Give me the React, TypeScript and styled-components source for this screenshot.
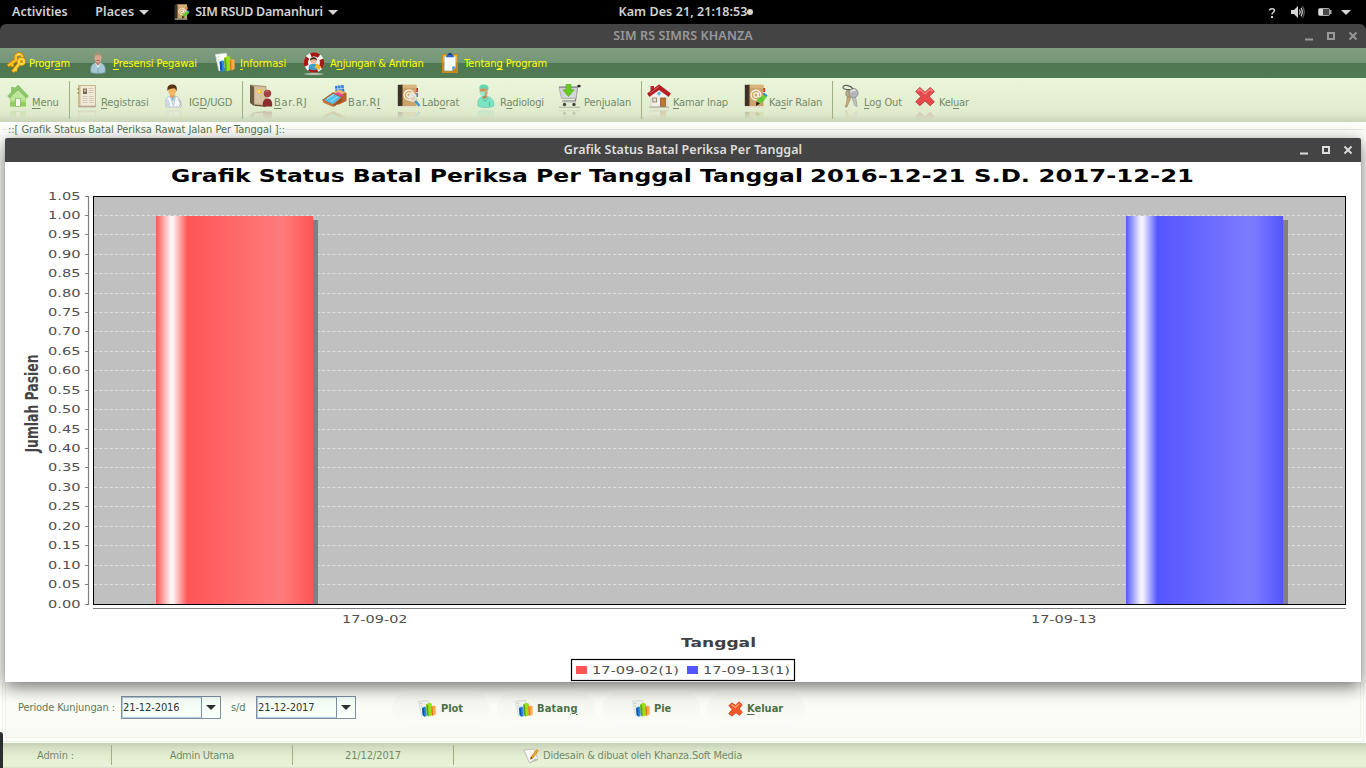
import React from 'react';
import styled, { createGlobalStyle } from 'styled-components';

const UI = '"DejaVu Sans Condensed", "DejaVu Sans", sans-serif';
const SHELL = '"Noto Sans", "Open Sans", sans-serif';

const GlobalStyle = createGlobalStyle`
  * { box-sizing: border-box; }
  body { margin: 0; background: #000; overflow: hidden; }
  svg { display: block; flex: none; }
`;

/* ---------- shell ---------- */

const Desktop = styled.div`
  width: 1366px;
  height: 768px;
  display: flex;
  flex-direction: column;
  background: #000;
  overflow: hidden;
`;

const TopBar = styled.header`
  height: 24px;
  flex: none;
  display: grid;
  grid-template-columns: 1fr auto 1fr;
  align-items: center;
  padding: 0 15px 0 12px;
  background: #000;
  color: #d2d2d2;
`;

const ShellText = styled.span<{ $ls?: number }>`
  font: 600 12.5px/24px ${SHELL};
  letter-spacing: ${p => p.$ls ?? 0}px;
  white-space: nowrap;
`;

const ShellMenus = styled.div`
  display: flex;
  align-items: center;
`;

const ShellMenu = styled.div<{ $gap: number }>`
  display: flex;
  align-items: center;
  gap: 5px;
  margin-left: ${p => p.$gap}px;
`;

const Clock = styled.div`
  display: flex;
  align-items: center;
  padding-left: 9px;
`;

const ClockDot = styled.i`
  width: 6px;
  height: 6px;
  border-radius: 50%;
  background: #d6d6d6;
`;

const Tray = styled.div`
  display: flex;
  justify-content: flex-end;
  align-items: center;
`;

const TitleBar = styled.div<{ $active?: boolean }>`
  height: 24px;
  flex: none;
  display: grid;
  grid-template-columns: 1fr auto 1fr;
  align-items: center;
  padding: 0 8px;
  background: #444;
  color: ${p => (p.$active ? '#dedede' : '#999')};
  border-radius: ${p => (p.$active ? '2px 2px 0 0' : '6px 6px 0 0')};
`;

const WindowButtons = styled.div`
  display: flex;
  justify-content: flex-end;
  grid-column: 3;
`;

const WindowTitle = styled(ShellText)`
  grid-column: 2;
`;

/* ---------- application ---------- */

const Label = styled.span<{ $ls?: number; $bold?: boolean }>`
  font: ${p => (p.$bold ? 700 : 400)} 11px/14px ${UI};
  letter-spacing: ${p => p.$ls ?? -0.1}px;
  white-space: nowrap;
`;

const Mnemonic = styled.span`
  text-decoration: underline;
  text-decoration-thickness: 1px;
  text-underline-offset: 1.5px;
`;

const MenuBar = styled.nav`
  height: 30px;
  flex: none;
  display: flex;
  align-items: center;
  padding-left: 6px;
  color: #ffff00;
  background: linear-gradient(#7f9f80 0, #759676 15px, #4f7850 15px, #507a51 30px);
`;

const ToolBar = styled.div`
  height: 44px;
  flex: none;
  display: flex;
  align-items: flex-start;
  padding-left: 7px;
  color: #738a6c;
  background: linear-gradient(#eaf5da 0, #e4efd2 24px, #dfe9cb 36px, #c9d4b8 44px);
`;

const BarItem = styled.div<{ $w: number }>`
  width: ${p => p.$w}px;
  flex: none;
  display: flex;
`;

const MenuItem = styled(BarItem)`
  align-items: center;
`;

const ToolItem = styled(BarItem)`
  padding-top: 6px;
`;

const IconCell = styled.div<{ $w: number }>`
  width: ${p => p.$w}px;
  flex: none;
`;

const ToolIcon = styled(IconCell)`
  svg {
    -webkit-box-reflect: below 2px linear-gradient(transparent 62%, rgba(0, 0, 0, 0.28));
  }
`;

const MenuLabel = styled(Label)`
  padding-top: 2px;
`;

const ToolLabel = styled(Label)`
  margin-top: 12px;
`;

const ToolSeparator = styled.i<{ $after: number }>`
  width: 1px;
  height: 38px;
  margin: 3px ${p => p.$after}px 0 0;
  background: #a3ad83;
`;

const Content = styled.main`
  position: relative;
  height: 621px;
  flex: none;
  display: flex;
  flex-direction: column;
  justify-content: space-between;
  background: #fdfefa;
  z-index: 1;
`;

const GroupHeading = styled.div`
  display: flex;
  align-items: center;
  height: 15px;
  color: #55734f;
  padding: 0 2px;
  gap: 1px;
  &::before {
    content: '';
    width: 5px;
    height: 1px;
    background: #e4e8e0;
  }
  &::after {
    content: '';
    flex: 1;
    height: 1px;
    background: #e4e8e0;
  }
`;

const Footer = styled.div`
  height: 61px;
  padding: 0 2px 1px;
`;

const FooterEdge = styled.div`
  height: 60px;
  padding: 0 2px 3px;
  border: solid #edf1e6;
  border-width: 0 1px 1px;
`;

const ControlPanel = styled.div`
  height: 56px;
  display: flex;
  align-items: flex-start;
  padding: 11px 0 0 12px;
  color: #5c7957;
  border: solid #edf1e6;
  border-width: 0 1px 1px;
  background: linear-gradient(#fdfef8, #f9faf3);
`;

const FieldLabel = styled(Label)<{ $w: number; $indent?: number }>`
  width: ${p => p.$w}px;
  padding-left: ${p => p.$indent ?? 0}px;
  margin-top: 8px;
`;

const DateCombo = styled.div`
  width: 100px;
  height: 23px;
  margin-top: 3px;
  display: flex;
  border: 1px solid #7d8fa0;
  background: #f7fff9;
  color: #333;
`;

const DateValue = styled.div`
  width: 80px;
  display: flex;
  align-items: center;
  border: 1px solid #b4cbdf;
  border-right: 1px solid #7d8fa0;
`;

const ComboArrow = styled.div`
  flex: 1;
  display: flex;
  align-items: center;
  justify-content: center;
`;

const ActionButton = styled.button<{ $pad: number; $gap: number }>`
  width: 98px;
  height: 30px;
  margin: 0 0 0 ${p => p.$gap}px;
  padding: 1px 0 0 ${p => p.$pad}px;
  display: flex;
  align-items: center;
  border: 0;
  border-radius: 15px;
  color: #4d704b;
  background: linear-gradient(rgba(243, 244, 234, 0.5), #f7f8f1 60%, #fcfcf8);
`;

const ActionIcon = styled.span<{ $w: number }>`
  width: ${p => p.$w}px;
`;

const StatusBar = styled.footer`
  height: 25px;
  flex: none;
  display: flex;
  padding-bottom: 1px;
  color: #728969;
  background: linear-gradient(#c3cfb2 0, #d4dfc3 5px, #e3eed1 13px, #e8f4d7 23px, #dbe6ca 24px);
`;

const StatusCell = styled.div<{ $w: number }>`
  width: ${p => p.$w}px;
  display: flex;
  align-items: center;
  justify-content: center;
  height: 24px;
  padding-top: 1px;
`;

const StatusRule = styled.i`
  width: 1px;
  height: 20px;
  margin-top: 2px;
  background: #a3ad83;
`;

const Credits = styled.div`
  display: flex;
  align-items: center;
  gap: 4px;
  height: 24px;
  padding: 1px 0 0 69px;
`;

const DockEdge = styled.i`
  position: absolute;
  left: 0;
  top: 732px;
  width: 3px;
  height: 36px;
  border-radius: 0 3px 0 0;
  background: #2a2f30;
  z-index: 2;
`;

const Dialog = styled.section`
  position: absolute;
  left: 5px;
  top: 16px;
  width: 1356px;
  height: 544px;
  background: #fff;
  border-radius: 2px 2px 0 0;
  box-shadow: 0 5px 17px rgba(0, 0, 0, 0.55), 0 0 2px rgba(0, 0, 0, 0.1);
`;

/* ---------- icons ---------- */

const Caret = ({ w = 10, h = 5, c = '#d6d6d6' }) => (
  <svg width={w} height={h} viewBox="0 0 10 5"><path d="M0 0H10L5 5Z" fill={c} /></svg>
);

const WinControls = ({ color }: { color: string }) => (
  <svg width="53" height="10" viewBox="0 0 53 10" fill="none" stroke={color}>
    <path d="M0 8.5H8" strokeWidth="2" />
    <rect x="23" y="2" width="6" height="6" strokeWidth="2" />
    <path d="M44.5 1.5l7 7M51.5 1.5l-7 7" strokeWidth="1.8" />
  </svg>
);

const KeysGold = () => (
  <svg width="20" height="22" viewBox="0 0 20 22">
    <g fill="none" stroke="#b8780c" strokeWidth="4"><circle cx="13" cy="5.500" r="3.400" /><path d="M10 8L1.800 14M6 12l.5 3" /></g>
    <g fill="none" stroke="#ffbe1c" strokeWidth="2.600"><circle cx="13" cy="5.500" r="3.400" /><path d="M10 8L2 13.800M6 11.500l.5 3" /></g>
    <g fill="none" stroke="#c98400" strokeWidth="3.800"><circle cx="15.400" cy="9.600" r="2.600" /><path d="M13 12L6.500 20M9 17.500l2.200 1" /></g>
    <g fill="none" stroke="#ffd63f" strokeWidth="2.400"><circle cx="15.400" cy="9.600" r="2.600" /><path d="M13 12L7 19.500M9 17.500l1.800.8" /></g>
    <path d="M10.500 4a3.600 3.600 0 0 1 4-1.700" stroke="#fff2a8" fill="none" />
  </svg>
);

const Person = () => (
  <svg width="16" height="22" viewBox="0 0 16 22">
    <path d="M.8 20.500c-.6-5.500.7-8.500 4.200-9.500h6c3.500 1 4.800 4 4.200 9.500-3 1.300-11.400 1.300-14.400 0z" fill="#a5c6d2" stroke="#6b98aa" strokeWidth=".7" />
    <path d="M5 11l3 5 3-5z" fill="#e2f1f5" /><path d="M8 16v5" stroke="#7fa9b8" />
    <path d="M6 9h4v3l-2 1.500L6 12z" fill="#bd8a75" />
    <ellipse cx="8" cy="6" rx="3.600" ry="4.600" fill="#d7a590" />
    <path d="M4 6C3.400 2 5.500.6 8 .6S12.600 2 12 6c-.6-2-1.400-3-4-3S4.600 4 4 6z" fill="#a29572" />
    <path d="M6.500 8.500h3" stroke="#a8664f" />
  </svg>
);

const BarsIcon = ({ s = 20, pale = false }: { s?: number; pale?: boolean }) => (
  <svg width={s} height={s} viewBox="0 0 20 20">
    <path d="M.5 1.500L11.500.3l1.500 12L4 18z" fill={pale ? '#eef1ec' : '#fff'} stroke={pale ? '#ccd2cb' : '#dfe9e2'} strokeWidth=".7" />
    <path d="M2.500 4l2-.3M3 7l1.500-.2" stroke="#c0cbc8" />
    <path d="M4.600 8.500l3-1.200L9.600 8.500v9.500l-2.400.6L5.200 16.500z" fill="#2b8be8" /><path d="M4.600 8.500l2.200 1 .4 9.100-2-2.100z" fill="#0d50ac" />
    <path d="M9.200 4.800l3.700-1.700 2.500 1v13.200L12 18.300 10 17z" fill="#9be01c" /><path d="M9.200 4.800l2 .9.800 12.600-2-1.300z" fill="#5aa80c" />
    <path d="M14.800 7l2.800-1 2 1v9l-3 1.400-1.300-.8z" fill="#ffaa48" /><path d="M14.800 7l1.400.7.4 9.700-1.300-.7z" fill="#dd7014" />
  </svg>
);

const LifeBuoy = () => (
  <svg width="22" height="23" viewBox="0 0 22 23">
    <ellipse cx="11" cy="22" rx="10" ry=".8" fill="#cfdccb" />
    <circle cx="11" cy="10.500" r="8" fill="#2f5d3a" stroke="#f3f3f1" strokeWidth="4.400" />
    <circle cx="11" cy="10.500" r="8" fill="none" stroke="#a41a14" strokeWidth="4.400" strokeDasharray="8.500 4.066" strokeDashoffset="3.500" />
    <circle cx="11" cy="10.500" r="5.900" fill="#e8f4f8" />
    <path d="M5.500 16.500c0-3.800 2-4.800 5.500-4.800s5.500 1.300 5.500 4.800c-3 2.200-8 2.200-11 0z" fill="#3aa0d2" />
    <circle cx="10.500" cy="8.500" r="3.200" fill="#f0b893" /><path d="M7 8.500C6.800 4.500 14 4 14 8.500c-2-1.600-4-2-7 0z" fill="#3c2212" />
    <path d="M13.500 11.500l4.500 3-1.500 3.500-5-2.500z" fill="#ffb820" />
  </svg>
);

const Clipboard = () => (
  <svg width="16" height="20" viewBox="0 0 16 20">
    <rect x=".5" y="1.500" width="15" height="18" fill="#c98210" stroke="#c98a1c" /><rect x="1" y="2" width="14" height="7" fill="#f4ae26" />
    <path d="M2.400 3.500h11.200v10.500l-3.300 3.800H2.400z" fill="#f7fbff" stroke="#a8c8ea" strokeWidth=".6" />
    <path d="M13.600 13.500h-3.300V18z" fill="#3f8fe0" /><path d="M5 1.200h6l1 3H4z" fill="#2367c0" /><rect x="6.500" y="0" width="3" height="2" fill="#12408f" />
  </svg>
);

const HomeGreen = () => (
  <svg width="22" height="24" viewBox="0 0 22 24">
    <path d="M4 3h3.500v5H4z" fill="#96c873" />
    <path d="M3 12h16v10.500H3z" fill="#aedc84" /><path d="M3 18h16v4.500H3z" fill="#93cd60" />
    <path d="M11 1L.6 12.200l2 1.800L11 6l8.400 8 2-1.800z" fill="#8ac766" stroke="#78b557" strokeWidth=".6" />
    <path d="M11 6.800L4 13.500V16h14v-2.500z" fill="#bfe79b" /><rect x="8.500" y="14.500" width="5" height="8" fill="#f4fbe9" stroke="#82bb5e" strokeWidth=".8" />
  </svg>
);

const Newspaper = () => (
  <svg width="20" height="24" viewBox="0 0 20 24">
    <path d="M1.500 1.500h17V22h-17z" fill="#f1e8d6" stroke="#c9b491" /><path d="M1 1h2.500v21H1z" fill="#d6b98a" />
    <rect x="6" y="4.500" width="4" height="5.500" fill="#746b5e" /><circle cx="8" cy="6.500" r="1.200" fill="#ddb48f" />
    <path d="M11.500 4.500h5M11.500 6.500h5M11.500 8.500h5M5.500 12.500h5M5.500 14.500h5M5.500 16.500h5M5.500 18.500h5M12 12.500h4.500M12 14.500h4.500M12 16.500h4.500M12 18.500h4.500" stroke="#cbc0ad" strokeWidth=".8" />
    <path d="M.5 5h1.500M.5 9h1.500" stroke="#7c5c32" /><path d="M1 22.800h18" stroke="#a79c84" />
  </svg>
);

const Doctor = () => (
  <svg width="20" height="24" viewBox="0 0 20 24">
    <path d="M2 23c-1.500-7 0-9.500 4-11h5c4 1 6.500 5 6 11z" fill="#f6f9fb" stroke="#a6b5c0" strokeWidth=".8" />
    <path d="M1.500 22c-.6-3 0-6 1.500-7.500l3 4V23z" fill="#ccd9e4" /><path d="M6 12l3 6 2.500-6z" fill="#8fbbe0" /><path d="M6 12l3.500 10M11.500 12L9.500 22" stroke="#b6c5d0" />
    <path d="M6 9h4.500v3l-2 2.500L6 12z" fill="#e09f56" /><ellipse cx="8.200" cy="6.800" rx="4" ry="4.800" fill="#f5b867" />
    <path d="M3.600 7C2.500 2 5 .5 8.500.5S13.500 3 12.600 7.500C12 5.500 11.500 4.500 10 4.300 7 5 5 4.500 3.600 7z" fill="#5a3412" />
    <path d="M14 15l3 5-2 2" stroke="#a8b9c6" fill="none" />
  </svg>
);

const BookPerson = () => (
  <svg width="24" height="24" viewBox="0 0 24 24">
    <path d="M1.500 1L17 2.500V22l-12-1z" fill="#c9b18c" stroke="#8f785a" strokeWidth=".6" /><path d="M1 1l4 1.500V22l-4-3z" fill="#6e5844" />
    <path d="M6 3l10.500.5V20L6 19.500z" fill="#d6c3a1" /><circle cx="10" cy="7.500" r="2.400" fill="#f6c52c" /><circle cx="10" cy="7.500" r="1" fill="#fff3ae" />
    <path d="M5 20.500l12 1v1.200L6 22z" fill="#6b5540" />
    <circle cx="18.500" cy="9.500" r="3.700" fill="#a04040" /><path d="M14 22.500c-.8-4 .5-8 4.500-8s5.200 4 4.500 8z" fill="#8c2c2e" /><path d="M16.500 8a2.500 2.500 0 0 1 3-.8" stroke="#cf7a74" fill="none" />
  </svg>
);

const BedIcon = () => (
  <svg width="25" height="24" viewBox="0 0 25 24">
    <path d="M13 2l8.500-1 1 7-9 1z" fill="#2f78d6" /><path d="M15.500 1.500l1 7M18.500 1.200l1 7M13.200 5.200l9-1" stroke="#b6d6f7" strokeWidth=".9" />
    <path d="M10 10l8-4 6.500 3v8L16 21z" fill="#b5632a" /><path d="M10 9l7-3.500 6.500 3-5.500 3z" fill="#e8b478" />
    <path d="M1 16l10-7 9 4.500-9 7.500z" fill="#52c0ec" stroke="#b4602c" strokeWidth="1.300" />
    <path d="M13 9.500l3-1.300 5.500 2.800-2 1.700z" fill="#dc46a0" /><path d="M5 15l7-4.500M9 17.500l7-5" stroke="#a7e0f6" /><path d="M1 16.500l10 4.800V23L1 18.500z" fill="#c8763a" /><path d="M20 13.800v3.500L11.500 23v-2z" fill="#a05020" />
  </svg>
);

const NoteBook = ({ s = 24, kind }: { s?: number; kind: 'search' | 'pen' }) => (
  <svg width={s} height={s} viewBox="0 0 24 24">
    <path d="M19 4h2v4h-2z" fill="#d03024" /><path d="M19 9h2v4h-2z" fill="#3a8ad0" />
    <path d="M4 .8h15.500V22H4z" fill="#cba469" /><path d="M4 .8h15.500V4H4z" fill="#d9b47c" /><path d="M.8.800h4.600V22H.800z" fill="#3c3126" /><path d="M5.400.8V22" stroke="#8d6a3a" />
    <path d="M1 22.700h19" stroke="#e4dcc8" strokeWidth="1.400" />
    <g fill="none" stroke="#fbf4e6" strokeWidth="1.300"><circle cx="12" cy="11" r="2.200" /><path d="M14.300 8.500v3.600c.4 1.600 2.600 1 2.600-1.200a4.900 4.900 0 1 0-2.300 4.300" /></g>
    {kind === 'search' ? (
      <g><circle cx="15.500" cy="13.500" r="3.500" fill="#dfe8ea" fillOpacity=".6" stroke="#e9e9e4" strokeWidth="1.300" /><path d="M18.500 17l4 5" stroke="#4093cc" strokeWidth="2.300" /></g>
    ) : (
      <g><path d="M12.500 16l5-4 3.500 3.500-4.500 4z" fill="#62c832" /><path d="M16 19.500l-4 2.500.500-4.500z" fill="#1d1d1d" /><path d="M19.500 10l3.500 2.500-2 3-3.500-3z" fill="#6bd238" /><path d="M19.300 9.300l3.700 2.700" stroke="#2f8ad6" strokeWidth="1.600" /></g>
    )}
  </svg>
);

const Surgeon = () => (
  <svg width="18" height="24" viewBox="0 0 18 24">
    <path d="M1 22c-.8-6 1-8.500 5-9.500h4.500c4 1 6.800 4 6.300 9.500-4 2-12 2-15.800 0z" fill="#7ce4c2" stroke="#5cc6a1" strokeWidth=".6" />
    <path d="M5.500 9.500h4v4l-2 1.500-2-1.500z" fill="#c67d4e" /><ellipse cx="6.800" cy="6.800" rx="4.200" ry="5" fill="#d9935f" />
    <path d="M2.300 5C2 1.500 4.500.3 7.500.5s4.600 2.500 4 5C8.500 4.300 5 4 2.300 5z" fill="#5fd6ae" />
    <path d="M2.800 7.500l5.500.3-.6 4.200c-2.400 1-4-.5-4.900-4.500z" fill="#8cf0d2" /><path d="M8.300 7.800l2.800-1" stroke="#a8f4dd" /><path d="M5 14.500l3 3 3-3.500M12.500 18v4" stroke="#51bd97" fill="none" />
  </svg>
);

const CartIcon = () => (
  <svg width="23" height="24" viewBox="0 0 23 24">
    <path d="M22 2.500l-2.600.600-2 14H4.500" fill="none" stroke="#77747c" strokeWidth="1.200" /><path d="M19.500 2h3" stroke="#222" strokeWidth="2.200" />
    <path d="M1 3.500h18.500l-1.500 11H3.500z" fill="#d0d0d3" stroke="#a2a2a6" strokeWidth=".7" /><path d="M4 6h14M4.300 9h13.400M4.600 12h13" stroke="#e2e2e4" strokeWidth=".9" />
    <path d="M1 3h18.500" stroke="#77747c" /><path d="M4.500 17.500h13" stroke="#b2b2b6" strokeWidth="1.600" />
    <circle cx="6.500" cy="20.500" r="1.700" fill="#444" /><circle cx="16" cy="20.500" r="1.700" fill="#444" /><path d="M1 23.200h21" stroke="#aab397" />
    <path d="M8 .3h5v5.500h3.200L10.500 12.500 4.800 5.800H8z" fill="#6aca24" stroke="#4f9f1c" strokeWidth=".6" />
  </svg>
);

const HouseRed = () => (
  <svg width="24" height="24" viewBox="0 0 24 24">
    <path d="M3.500 2h3.500v6H3.500z" fill="#b42a2c" /><path d="M4 11l8-7 8 7v11.500H4z" fill="#f0efec" stroke="#c8c4be" strokeWidth=".6" />
    <path d="M12 .8L.5 9.500l1.800 3L12 5.800l9.700 6.700 1.800-3z" fill="#b81d22" stroke="#84060c" strokeWidth=".5" />
    <circle cx="12" cy="9.600" r="1.900" fill="#5ab0de" stroke="#e4e4e0" strokeWidth=".6" />
    <rect x="5.800" y="14" width="3.700" height="4" fill="#dce9ee" stroke="#9a7b60" strokeWidth=".9" /><rect x="13.500" y="14" width="5" height="8.500" fill="#c07830" stroke="#8d582a" strokeWidth=".8" />
    <path d="M2 23.200h20" stroke="#a8a898" /><path d="M12 2.300L3 9.200" stroke="#e0686a" />
  </svg>
);

const KeysSilver = () => (
  <svg width="18" height="24" viewBox="0 0 18 24">
    <path d="M5 13l4 .5-4 9.500H3l1.500-4z" fill="#c9ab72" stroke="#93805c" strokeWidth=".5" />
    <path d="M9.800 13l3.700-.5 1.700 10-2.500-1z" fill="#c2c2c2" stroke="#858585" strokeWidth=".5" />
    <circle cx="7" cy="9.500" r="3.400" fill="#b9a986" stroke="#857b67" strokeWidth=".6" />
    <circle cx="11.500" cy="9" r="4.600" fill="#b4b6b8" stroke="#808284" strokeWidth=".7" /><path d="M8.700 8a3.200 3.200 0 0 1 4.800-1.200" stroke="#f1f1f1" strokeWidth="1.300" fill="none" />
    <path d="M11 5C9 1.600 3 .3 1.300 2.500S4.500 6 8.300 5.500" stroke="#5b605b" strokeWidth="1.200" fill="none" />
  </svg>
);

const CrossRed = () => (
  <svg width="20" height="24" viewBox="0 0 20 24">
    <path d="M4.800 3.500L10 8.300l5.200-4.800 4.100 4-5.200 5 5.200 5.200-4.100 4L10 16.900l-5.200 4.800-4.100-4 5.200-5.200-5.200-5z" fill="#e6494c" stroke="#b8383b" strokeWidth=".9" strokeLinejoin="round" />
    <path d="M2.500 7.200l2.300-2L10 10l5.200-4.800 2.300 2" fill="none" stroke="#f58e8c" strokeWidth="1.200" />
  </svg>
);

const CrossOrange = () => (
  <svg width="15" height="16" viewBox="0 0 15 16">
    <path d="M.8 4.500L4 1.800l3.500 2.400L11 .8l3.200 3-2.800 3.900 3 3.500-2.900 3.200L7.900 11.800 4 15.200.6 12.600l3.500-4.200z" fill="#f0582a" stroke="#c84420" strokeWidth=".7" strokeLinejoin="round" />
    <path d="M3.500 3.800l4 2.700L11 2.800" fill="none" stroke="#ffac7c" strokeWidth="1.200" />
  </svg>
);

const NotePencil = () => (
  <svg width="16" height="16" viewBox="0 0 16 16">
    <path d="M.8 2L11 1l4 10.500L6.500 15z" fill="#f7f7f5" stroke="#b3b5ac" strokeWidth=".8" /><path d="M6.500 15l8.500-3.500-3-1z" fill="#b9bcb4" />
    <path d="M13.800 1.500l1.600 1.300L10 10l-2.500 1.300.6-2.700z" fill="#f5a21c" stroke="#b87a20" strokeWidth=".5" /><path d="M8 9l-.5 2.300L9.800 10z" fill="#453318" />
  </svg>
);

/* ---------- toolbar and menu data ---------- */

const Caption = ({ text }: { text: string }) => {
  const i = text.indexOf('_');
  if (i < 0) return <>{text}</>;
  return <>{text.slice(0, i)}<Mnemonic>{text[i + 1]}</Mnemonic>{text.slice(i + 2)}</>;
};

type Entry = { icon: React.ReactNode; text: string; w: number; cell: number; ls?: number };

const menus: Entry[] = [
  { icon: <KeysGold />, text: 'Progr_am', w: 84, cell: 23 },
  { icon: <Person />, text: '_Presensi Pegawai', w: 125, cell: 23, ls: -0.08 },
  { icon: <BarsIcon />, text: '_Informasi', w: 88, cell: 25, ls: 0 },
  { icon: <LifeBuoy />, text: 'A_njungan & Antrian', w: 139, cell: 27, ls: -0.2 },
  { icon: <Clipboard />, text: 'Tentan_g Program', w: 120, cell: 22, ls: -0.05 },
];

const tools: (Entry | number)[] = [
  { icon: <HomeGreen />, text: '_Menu', w: 62, cell: 25 },
  7,
  { icon: <Newspaper />, text: '_Registrasi', w: 87, cell: 24 },
  { icon: <Doctor />, text: 'IG_D/UGD', w: 78, cell: 25 },
  6,
  { icon: <BookPerson />, text: '_Bar.RJ', w: 73, cell: 25, ls: 0.75 },
  { icon: <BedIcon />, text: 'Bar.R_I', w: 75, cell: 26, ls: 0.6 },
  { icon: <NoteBook kind="search" />, text: 'Lab_orat', w: 80, cell: 25 },
  { icon: <Surgeon />, text: 'R_adiologi', w: 81, cell: 23, ls: -0.2 },
  { icon: <CartIcon />, text: 'Pen_jualan', w: 83, cell: 26 },
  5,
  { icon: <HouseRed />, text: '_Kamar Inap', w: 97, cell: 26, ls: -0.2 },
  { icon: <NoteBook kind="pen" />, text: 'Ka_sir Ralan', w: 88, cell: 25, ls: -0.2 },
  9,
  { icon: <KeysSilver />, text: '_Log Out', w: 73, cell: 22 },
  { icon: <CrossRed />, text: 'Kel_uar', w: 60, cell: 24, ls: -0.25 },
];

/* ---------- chart ---------- */

const ChartSvg = styled.svg`
  font-family: 'DejaVu Sans', sans-serif;
  font-size: 11px;
  fill: #505050;
`;

const AXIS_TOP = 34.5;
const AXIS_BOTTOM = 442.5;
const STEP = (AXIS_BOTTOM - AXIS_TOP) / 21;

type BarSpec = { id: string; x: number; base: string; light: string };

const bars: BarSpec[] = [
  { id: 'red', x: 151, base: '#ff5555', light: '#ff7c7c' },
  { id: 'blue', x: 1121, base: '#5555ff', light: '#7c7cff' },
];

const Fit = ({ x, y, w, children, ...rest }: { x: number; y: number; w: number; children: string } & React.SVGProps<SVGTextElement>) => (
  <text x={x} y={y} textLength={w} lengthAdjust="spacingAndGlyphs" {...rest}>{children}</text>
);

const Chart = () => (
  <ChartSvg width="1356" height="520" viewBox="0 0 1356 520">
    <defs>
      {bars.map(b => (
        <linearGradient key={b.id} id={b.id}>
          <stop offset="0" stopColor={b.base} />
          <stop offset=".1" stopColor="#fff" />
          <stop offset=".2" stopColor={b.base} />
          <stop offset=".8" stopColor={b.light} />
          <stop offset="1" stopColor={b.base} />
        </linearGradient>
      ))}
    </defs>
    <g fontSize="18" fontWeight="700" fill="#000">
      <Fit x={166} y={20} w={632}>Grafik Status Batal Periksa Per Tanggal Tanggal</Fit>
      <Fit x={805} y={20} w={384}>2016-12-21 S.D. 2017-12-21</Fit>
    </g>
    <rect x="88.500" y="34.500" width="1252" height="408" fill="#c0c0c0" />
    {Array.from({ length: 22 }, (_, i) => {
      const y = Math.floor(AXIS_BOTTOM - 0.6 - i * STEP) + 0.5;
      const tick = i === 0 ? AXIS_BOTTOM : i === 21 ? AXIS_TOP : y;
      return (
        <g key={i}>
          {i > 0 && i < 21 && <path d={`M89 ${y}H1340`} stroke="#e0e0e0" strokeDasharray="3 2.300" />}
          <path d={`M80 ${tick}H84`} stroke="#808080" />
          <Fit x={43} y={tick + 3.5} w={32.5}>{(i * 0.05).toFixed(2)}</Fit>
        </g>
      );
    })}
    {bars.map(b => (
      <g key={b.id}>
        <rect x={b.x + 5} y="58" width="157" height="384" fill="#808080" />
        <rect x={b.x} y="54" width="157" height="388" fill={`url(#${b.id})`} />
        <path d={`M${b.x + 15.8} 54V442M${b.x + 125.500} 54V442`} stroke="#808080" strokeOpacity=".1" />
      </g>
    ))}
    <rect x="88.500" y="34.500" width="1252" height="408" fill="none" stroke="#000" />
    <path d="M83.500 34V443" stroke="#808080" strokeWidth="1.200" />
    <path d="M88 446.500H1341" stroke="#808080" />
    <Fit x={337} y={461} w={65.5}>17-09-02</Fit>
    <Fit x={1026} y={461} w={65.5}>17-09-13</Fit>
    <Fit x={676} y={485} w={75} fontSize="13" fontWeight="700" fill="#404040">Tanggal</Fit>
    <g transform="translate(32.500 290.500) scale(1.300 1) rotate(-90)">
      <Fit x={0} y={0} w={98} fontSize="13" fontWeight="700" fill="#444">Jumlah Pasien</Fit>
    </g>
    <rect x="566.500" y="497.500" width="223" height="21" fill="#fff" stroke="#000" strokeWidth="1.200" />
    <rect x="571" y="504" width="11" height="8" fill="#ff5555" />
    <Fit x={587} y={512} w={87}>17-09-02(1)</Fit>
    <rect x="682" y="504" width="11" height="8" fill="#5555ff" />
    <Fit x={698} y={512} w={87}>17-09-13(1)</Fit>
  </ChartSvg>
);

const Combo = ({ value }: { value: string }) => (
  <DateCombo>
    <DateValue><Label $ls={-0.1}>{value}</Label></DateValue>
    <ComboArrow><Caret c="#2c3033" /></ComboArrow>
  </DateCombo>
);

export default function App() {
  return (
    <Desktop>
      <GlobalStyle />
      <TopBar>
        <ShellMenus>
          <ShellText>Activities</ShellText>
          <ShellMenu $gap={27.5}><ShellText $ls={0.1}>Places</ShellText><Caret /></ShellMenu>
          <ShellMenu $gap={25}>
            <NoteBook s={16} kind="pen" />
            <ShellText $ls={-0.23}>SIM RSUD Damanhuri</ShellText>
            <Caret />
          </ShellMenu>
        </ShellMenus>
        <Clock><ShellText $ls={0.08}>Kam Des 21, 21:18:53</ShellText><ClockDot /></Clock>
        <Tray>
          <svg width="84" height="16" viewBox="0 0 84 16">
            <path d="M2.500 6.500C2.500 4.200 7.500 4 7.500 6.500 7.500 8.300 5 8.200 5 10.500" fill="none" stroke="#d6d6d6" strokeWidth="1.500" />
            <rect x="4" y="12" width="2" height="2" fill="#d6d6d6" />
            <path d="M24 6h3l4-4v12l-4-4h-3z" fill="#d6d6d6" />
            <path d="M32.500 5.500q1.500 2.500 0 5M34 3.800q2.600 4.200 0 8.400" fill="none" stroke="#d6d6d6" strokeWidth="1.200" />
            <path d="M35.500 2.200q3.600 5.800 0 11.600" fill="none" stroke="#666" strokeWidth="1.200" />
            <rect x="51.500" y="4.500" width="11" height="7" rx="1" fill="#484848" stroke="#aaa" /><rect x="52" y="5" width="4" height="6" fill="#ddd" /><rect x="63" y="6" width="1.500" height="4" fill="#aaa" />
            <path d="M74 6h10l-5 5z" fill="#d6d6d6" />
          </svg>
        </Tray>
      </TopBar>
      <TitleBar>
        <WindowTitle $ls={0.12}>SIM RS SIMRS KHANZA</WindowTitle>
        <WindowButtons><WinControls color="#999" /></WindowButtons>
      </TitleBar>
      <MenuBar>
        {menus.map(m => (
          <MenuItem key={m.text} $w={m.w}>
            <IconCell $w={m.cell}>{m.icon}</IconCell>
            <MenuLabel $ls={m.ls}><Caption text={m.text} /></MenuLabel>
          </MenuItem>
        ))}
      </MenuBar>
      <ToolBar>
        {tools.map((t, i) =>
          typeof t === 'number' ? (
            <ToolSeparator key={i} $after={t} />
          ) : (
            <ToolItem key={i} $w={t.w}>
              <ToolIcon $w={t.cell}>{t.icon}</ToolIcon>
              <ToolLabel $ls={t.ls}><Caption text={t.text} /></ToolLabel>
            </ToolItem>
          ),
        )}
      </ToolBar>
      <Content>
        <GroupHeading><Label $ls={-0.05}>::[ Grafik Status Batal Periksa Rawat Jalan Per Tanggal ]::</Label></GroupHeading>
        <Footer>
          <FooterEdge>
            <ControlPanel>
              <FieldLabel $w={103}>Periode Kunjungan :</FieldLabel>
              <Combo value="21-12-2016" />
              <FieldLabel $w={35} $indent={10}>s/d</FieldLabel>
              <Combo value="21-12-2017" />
              <ActionButton $gap={36} $pad={26}>
                <ActionIcon $w={23}><BarsIcon s={18} pale /></ActionIcon><Label $bold>Plot</Label>
              </ActionButton>
              <ActionButton $gap={7} $pad={18}>
                <ActionIcon $w={22}><BarsIcon s={18} pale /></ActionIcon><Label $bold $ls={0.15}><Caption text="Batan_g" /></Label>
              </ActionButton>
              <ActionButton $gap={7} $pad={30}>
                <ActionIcon $w={22}><BarsIcon s={18} pale /></ActionIcon><Label $bold>Pie</Label>
              </ActionButton>
              <ActionButton $gap={7} $pad={21}>
                <ActionIcon $w={19}><CrossOrange /></ActionIcon><Label $bold $ls={0}><Caption text="_Keluar" /></Label>
              </ActionButton>
            </ControlPanel>
          </FooterEdge>
        </Footer>
        <Dialog>
          <TitleBar $active>
            <WindowTitle $ls={0.05}>Grafik Status Batal Periksa Per Tanggal</WindowTitle>
            <WindowButtons><WinControls color="#dedede" /></WindowButtons>
          </TitleBar>
          <Chart />
        </Dialog>
      </Content>
      <StatusBar>
        <StatusCell $w={111}><Label $ls={-0.15}>Admin :</Label></StatusCell>
        <StatusRule />
        <StatusCell $w={180}><Label $ls={-0.3}>Admin Utama</Label></StatusCell>
        <StatusRule />
        <StatusCell $w={160}><Label>21/12/2017</Label></StatusCell>
        <StatusRule />
        <Credits><NotePencil /><Label $ls={-0.22}>Didesain &amp; dibuat oleh Khanza.Soft Media</Label></Credits>
      </StatusBar>
      <DockEdge />
    </Desktop>
  );
}
